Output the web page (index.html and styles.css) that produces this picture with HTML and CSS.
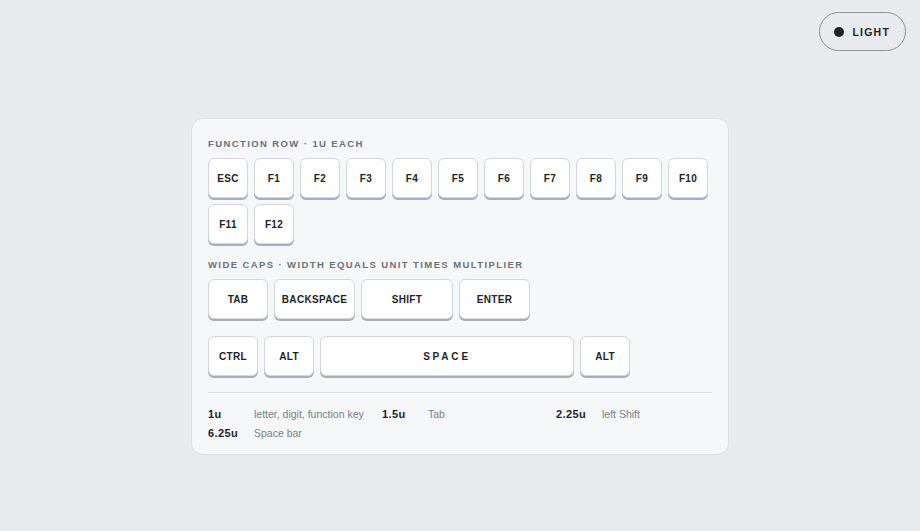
FILE: index.html
```html
<!DOCTYPE html>
<html lang="en">
<head>
    <meta charset="UTF-8">
    <meta name="viewport" content="width=device-width, initial-scale=1.0">
    <title>Keycap Units</title>
    <link rel="stylesheet" href="styles.css">
</head>
<body>
    <div class="topbar">
        <button class="theme-toggle"><span class="dot"></span>LIGHT</button>
    </div>

    <div class="board">
        <div class="section-label">Function row · 1u each</div>
        <div class="keys">
            <div class="key">ESC</div>
            <div class="key">F1</div>
            <div class="key">F2</div>
            <div class="key">F3</div>
            <div class="key">F4</div>
            <div class="key">F5</div>
            <div class="key">F6</div>
            <div class="key">F7</div>
            <div class="key">F8</div>
            <div class="key">F9</div>
            <div class="key">F10</div>
            <div class="key">F11</div>
            <div class="key">F12</div>
        </div>

        <div class="section-label second">Wide caps · width equals unit times multiplier</div>
        <div class="keys wide-row">
            <div class="key u150">TAB</div>
            <div class="key u200">BACKSPACE</div>
            <div class="key u225">SHIFT</div>
            <div class="key u175">ENTER</div>
        </div>
        <div class="keys wide-row">
            <div class="key u125">CTRL</div>
            <div class="key u125">ALT</div>
            <div class="key u625 space">SPACE</div>
            <div class="key u125">ALT</div>
        </div>

        <dl class="legend">
            <div class="legend-item"><dt>1u</dt><dd>letter, digit, function key</dd></div>
            <div class="legend-item"><dt>1.5u</dt><dd>Tab</dd></div>
            <div class="legend-item"><dt>2.25u</dt><dd>left Shift</dd></div>
            <div class="legend-item"><dt>6.25u</dt><dd>Space bar</dd></div>
        </dl>
    </div>
</body>
</html>
```

FILE: styles.css
```css
body {
    margin: 0;
    min-height: 531px;
    background-color: #e8eaee;
    font-family: 'Liberation Sans', Arial, sans-serif;
    color: #1f2328;
}

.topbar {
    display: flex;
    justify-content: flex-end;
    padding: 12px 14px 0 0;
}

.theme-toggle {
    display: flex;
    align-items: center;
    gap: 9px;
    height: 39px;
    padding: 0 15px 0 14px;
    background: transparent;
    border: 1px solid #8d929b;
    border-radius: 20px;
    font-family: inherit;
    font-size: 10.5px;
    font-weight: bold;
    letter-spacing: 1.2px;
    color: #1f2328;
    cursor: pointer;
}

.theme-toggle .dot {
    width: 10px;
    height: 10px;
    border-radius: 50%;
    background: #1f2328;
}

.board {
    width: 504px;
    margin: 67px auto 0;
    padding: 18px 16px 14px;
    background: #f6f7f9;
    border: 1px solid #dcdfe4;
    border-radius: 12px;
}

.section-label {
    font-size: 9.5px;
    line-height: 14px;
    font-weight: bold;
    letter-spacing: 1.4px;
    text-transform: uppercase;
    color: #6b7079;
    margin-bottom: 7px;
}

.section-label.second {
    margin-top: 14px;
}

.keys {
    display: flex;
    flex-wrap: wrap;
    gap: 6px;
}

.wide-row + .wide-row {
    margin-top: 17px;
}

.key {
    box-sizing: border-box;
    width: 40px;
    height: 40px;
    display: flex;
    align-items: center;
    justify-content: center;
    background: #fff;
    border: 1px solid #d3d6dc;
    border-radius: 6px;
    box-shadow: 0 2px 0 #a9aeb8;
    font-size: 10px;
    font-weight: bold;
    letter-spacing: 0.3px;
    color: #1f2328;
}

.key.u125 { width: 50px; }
.key.u150 { width: 60px; }
.key.u175 { width: 71px; }
.key.u200 { width: 81px; }
.key.u225 { width: 92px; }
.key.u625 { width: 254px; }

.key.space {
    letter-spacing: 2.8px;
}

.legend {
    display: grid;
    grid-template-columns: repeat(3, 156px);
    column-gap: 18px;
    row-gap: 5px;
    margin: 16px 0 0;
    padding-top: 14px;
    border-top: 1px solid #dcdfe4;
    font-size: 11px;
    line-height: 14px;
}

.legend-item {
    display: flex;
    white-space: nowrap;
}

.legend dt {
    width: 46px;
    flex-shrink: 0;
    font-weight: bold;
    letter-spacing: 0.4px;
    color: #1f2328;
}

.legend dd {
    margin: 0;
    font-size: 10.5px;
    color: #7a7f88;
}
```
